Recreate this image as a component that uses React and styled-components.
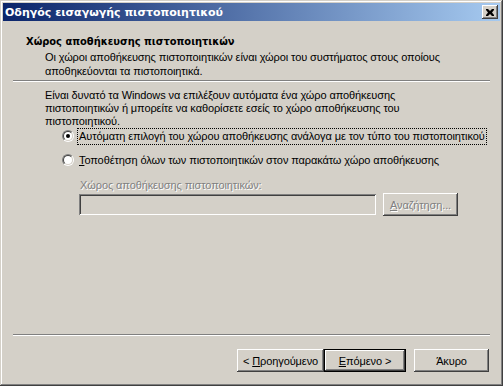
import React from 'react';
import styled, { createGlobalStyle } from 'styled-components';

const face = '#d4d0c8';
const font = '"Liberation Sans", Arial, sans-serif';
const boldFont = '"DejaVu Sans", Verdana, sans-serif';
const headFont = '"DejaVu Sans Condensed", "DejaVu Sans", sans-serif';

const Global = createGlobalStyle`
  html, body {
    margin: 0;
    padding: 0;
    background: ${face};
  }
  * {
    box-sizing: border-box;
  }
`;

const Window = styled.div`
  width: 503px;
  height: 386px;
  padding: 3px;
  display: flex;
  flex-direction: column;
  background: ${face};
  font-family: ${font};
  font-size: 11px;
  letter-spacing: -0.1px;
  color: #000;
  box-shadow: inset -1px -1px #404040, inset 1px 1px ${face},
    inset -2px -2px #808080, inset 2px 2px #fff;
`;

const TitleBar = styled.div`
  height: 18px;
  flex: none;
  display: flex;
  align-items: center;
  padding: 0 2px;
  background: linear-gradient(to right, #0a246a, #a6caf0);
`;

const Title = styled.div`
  flex: 1;
  color: #fff;
  font-family: ${boldFont};
  font-weight: bold;
  letter-spacing: 0;
  white-space: nowrap;
`;

const CloseButton = styled.div`
  width: 16px;
  height: 14px;
  display: flex;
  align-items: center;
  justify-content: center;
  background: ${face};
  box-shadow: inset -1px -1px #404040, inset 1px 1px #fff,
    inset -2px -2px #808080;
`;

const Header = styled.div`
  padding: 14px 10px 0 23px;
  height: 59px;
  flex: none;
`;

const HeaderTitle = styled.div`
  font-family: ${headFont};
  font-weight: bold;
  letter-spacing: 0;
  line-height: 13px;
`;

const HeaderText = styled.div`
  margin: 2px 0 0 19px;
  line-height: 14px;
`;

const Separator = styled.div`
  height: 2px;
  flex: none;
  margin: 0 ${(p) => p.$side}px;
  border-top: 1px solid #808080;
  border-bottom: 1px solid #fff;
`;

const Body = styled.div`
  flex: 1;
  padding: 7px 0 0 42px;
  display: flex;
  flex-direction: column;
`;

const Paragraph = styled.div`
  line-height: 13px;
  width: 400px;
`;

const Options = styled.div`
  margin: 0 0 0 17px;
  display: flex;
  flex-direction: column;
  gap: 8px;
`;

const OptionRow = styled.label`
  display: flex;
  align-items: center;
  height: 16px;
  gap: 4px;
`;

const Radio = styled.span`
  width: 12px;
  height: 12px;
  border-radius: 50%;
  flex: none;
  border: 1px solid;
  border-color: #808080 #fff #fff #808080;
  display: flex;
`;

const RadioInner = styled.span`
  flex: 1;
  border-radius: 50%;
  border: 1px solid;
  border-color: #404040 ${face} ${face} #404040;
  background: #fff;
  display: flex;
  align-items: center;
  justify-content: center;
`;

const Dot = styled.span`
  width: 4px;
  height: 4px;
  border-radius: 50%;
  background: #000;
`;

const OptionLabel = styled.span`
  padding: 1px 1px;
  line-height: 13px;
  white-space: nowrap;
  outline: ${(p) => (p.$focus ? '1px dotted #000' : 'none')};
  outline-offset: 0;
`;

const StoreBlock = styled.div`
  margin: 11px 0 0 34px;
  display: flex;
  flex-direction: column;
`;

const Disabled = styled.span`
  color: #808080;
  text-shadow: 1px 1px 0 #fff;
`;

const StoreLabel = styled(Disabled)`
  line-height: 13px;
  padding-left: 1px;
`;

const StoreRow = styled.div`
  margin-top: 1px;
  display: flex;
  align-items: center;
  gap: 7px;
`;

const TextBox = styled.div`
  width: 297px;
  height: 21px;
  background: ${face};
  box-shadow: inset 1px 1px #808080, inset -1px -1px #fff,
    inset 2px 2px #404040, inset -2px -2px ${face};
`;

const Button = styled.div`
  width: ${(p) => p.$w}px;
  height: 23px;
  display: flex;
  align-items: center;
  justify-content: center;
  background: ${face};
  white-space: pre;
  box-shadow: ${(p) =>
    p.$default
      ? `inset 0 0 0 1px #000, inset -2px -2px #404040, inset 2px 2px #fff, inset -3px -3px #808080`
      : `inset -1px -1px #404040, inset 1px 1px #fff, inset -2px -2px #808080`};
`;

const Footer = styled.div`
  flex: none;
  height: 47px;
  padding: 13px 11px 0 0;
  display: flex;
  justify-content: flex-end;
`;

const Spacer = styled.div`
  width: ${(p) => p.$w}px;
`;

export default function App() {
  return (
    <>
      <Global />
      <Window>
        <TitleBar>
          <Title>Οδηγός εισαγωγής πιστοποιητικού</Title>
          <CloseButton>
            <svg width="8" height="7" viewBox="0 0 8 7">
              <path
                d="M0 0h2l2 2 2-2h2v1L6 3.5 8 6v1H6L4 5 2 7H0V6l2-2.5L0 1z"
                fill="#000"
              />
            </svg>
          </CloseButton>
        </TitleBar>
        <Header>
          <HeaderTitle>Χώρος αποθήκευσης πιστοποιητικών</HeaderTitle>
          <HeaderText>
            Οι χώροι αποθήκευσης πιστοποιητικών είναι χώροι του συστήματος στους οποίους
            <br />
            αποθηκεύονται τα πιστοποιητικά.
          </HeaderText>
        </Header>
        <Separator $side={10} />
        <Body>
          <Paragraph>
            Είναι δυνατό τα Windows να επιλέξουν αυτόματα ένα χώρο αποθήκευσης
            <br />
            πιστοποιητικών ή μπορείτε να καθορίσετε εσείς το χώρο αποθήκευσης του
            <br />
            πιστοποιητικού.
          </Paragraph>
          <Options>
            <OptionRow>
              <Radio>
                <RadioInner>
                  <Dot />
                </RadioInner>
              </Radio>
              <OptionLabel $focus>
                Αυτόματη επιλογή του <u>χ</u>ώρου αποθήκευσης ανάλογα με τον τύπο του
                πιστοποιητικού
              </OptionLabel>
            </OptionRow>
            <OptionRow>
              <Radio>
                <RadioInner />
              </Radio>
              <OptionLabel>
                <u>Τ</u>οποθέτηση όλων των πιστοποιητικών στον παρακάτω χώρο αποθήκευσης
              </OptionLabel>
            </OptionRow>
          </Options>
          <StoreBlock>
            <StoreLabel>Χώρος αποθήκευσης πιστοποιητικών:</StoreLabel>
            <StoreRow>
              <TextBox />
              <Button $w={75}>
                <Disabled>
                  <u>Α</u>ναζήτηση...
                </Disabled>
              </Button>
            </StoreRow>
          </StoreBlock>
        </Body>
        <Separator $side={10} />
        <Footer>
          <Button $w={87}>
            <span>
              {'< '}
              <u>Π</u>ροηγούμενο
            </span>
          </Button>
          <Button $w={82} $default>
            <span>
              <u>Ε</u>πόμενο {'>'}
            </span>
          </Button>
          <Spacer $w={8} />
          <Button $w={75}>
            <span>Άκυρο</span>
          </Button>
        </Footer>
      </Window>
    </>
  );
}
